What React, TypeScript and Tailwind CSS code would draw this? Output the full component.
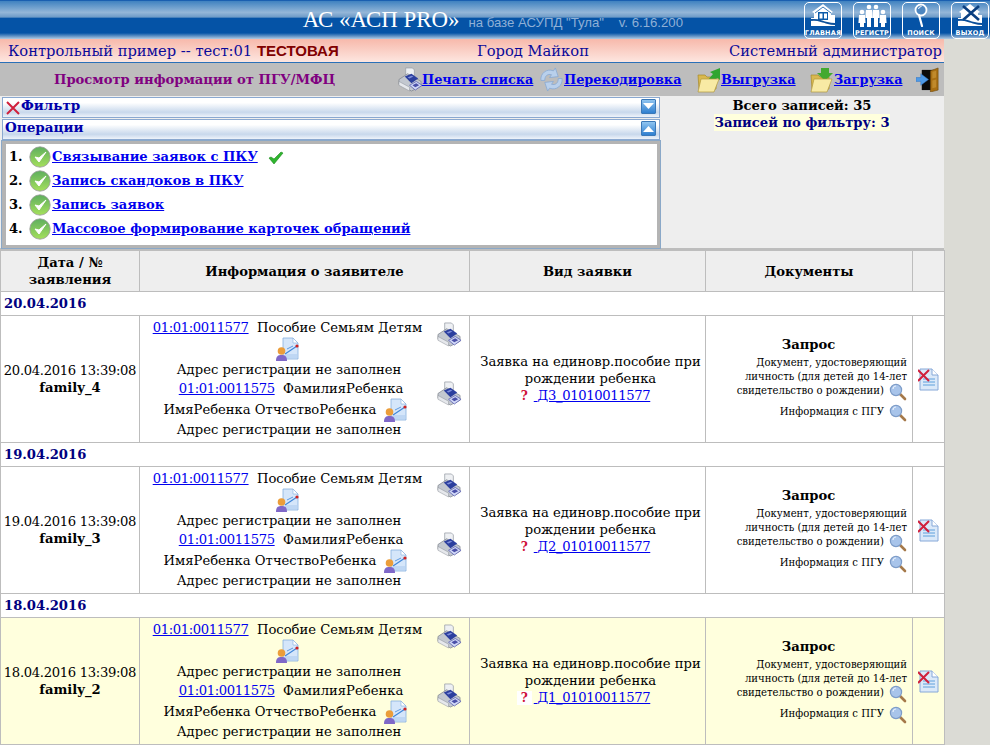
import React from "react";

const Printer = ({ className = "" }: { className?: string }) => (
  <svg viewBox="0 0 26 26" className={`w-[25px] h-[25px] shrink-0 ${className}`}>
    <path d="M8 1h7l2 2v8H8z" fill="#eef0f3" stroke="#9a9fa8" strokeWidth=".8" />
    <path d="M1 13l9-6 14 8v5l-10 5-13-7z" fill="#c3c8d0" stroke="#7a7f88" strokeWidth=".7" />
    <path d="M7 10l7-3 7 5-7 5z" fill="#2c3f9e" />
    <path d="M10 11l4-2 2 1-4 2z" fill="#7f8fdc" />
    <path d="M12 19l7-4 6 4-7 5z" fill="#cfd6f5" stroke="#5a5fb0" strokeWidth=".8" />
    <path d="M15 19l4-2 3 2-4 2z" fill="#4a4fa8" />
    <path d="M1 15l11 6v4l-11-6z" fill="#e6e8ec" stroke="#8b9098" strokeWidth=".5" />
  </svg>
);

const Recode = () => (
  <svg viewBox="0 0 26 26" className="w-[25px] h-[25px] shrink-0">
    <path d="M2 14C1 7 8 1 15 4l2-3 3 9-9 1 2-3c-4-1-7 1-7 6z" fill="#b9d0ec" stroke="#86a8d2" strokeWidth=".8" />
    <path d="M24 12c1 7-6 13-13 10l-2 3-3-9 9-1-2 3c4 1 7-1 7-6z" fill="#b9d0ec" stroke="#86a8d2" strokeWidth=".8" />
  </svg>
);

const Folder = ({ mode }: { mode: "up" | "down" }) => (
  <svg viewBox="0 0 24 26" className="w-[24px] h-[26px] shrink-0">
    <path d="M1 8h7l2 2h9v12H2z" fill="#d9b84e" stroke="#a88a2a" strokeWidth=".7" />
    {mode === "up" ? (
      <path d="M10 14l6-7-3-2 10-4v12l-3-2-5 7z" fill="#2fa52f" />
    ) : (
      <path d="M11 1h8v5h4l-8 8-8-8h4z" fill="#43a92f" />
    )}
    <path d="M4 12h18l-5 13H1z" fill="#f8eaa4" stroke="#b39a3c" strokeWidth=".7" />
  </svg>
);

const Door = () => (
  <svg viewBox="0 0 26 26" className="w-[25px] h-[25px] shrink-0">
    <path d="M6 3h13v21H6z" fill="#0c0c0c" />
    <path d="M15 4l8-3v23l-8 2z" fill="#a86f14" stroke="#6e4708" strokeWidth=".6" />
    <path d="M17 5l4-1v7l-4 1zM17 14l4-1v8l-4 1z" fill="#c08a2c" />
    <path d="M0 11h5V7l8 6-8 6v-4H0z" fill="#4f9be8" stroke="#2d6fbf" strokeWidth=".5" />
  </svg>
);

const GreenCheck = () => (
  <svg viewBox="0 0 22 22" className="w-[22px] h-[22px] shrink-0">
    <defs>
      <linearGradient id="gc" x1="0" y1="0" x2="0" y2="1">
        <stop offset="0" stopColor="#5fae5f" />
        <stop offset="1" stopColor="#a5e05c" />
      </linearGradient>
    </defs>
    <circle cx="11" cy="11" r="10.2" fill="url(#gc)" stroke="#9a9a9a" strokeWidth=".8" />
    <path d="M6 11l4 5 7-10-7 6z" fill="#fff" stroke="#fff" strokeWidth="1" strokeLinejoin="round" />
  </svg>
);

const SmallCheck = () => (
  <svg viewBox="0 0 16 14" className="w-[16px] h-[14px]">
    <path d="M1 7l5 6L15 2l-2-1-7 7-3-2z" fill="#2fb52f" stroke="#1a8a1a" strokeWidth=".6" />
  </svg>
);

const Cross = ({ className = "" }: { className?: string }) => (
  <svg viewBox="0 0 14 14" className={`w-[14px] h-[14px] shrink-0 ${className}`}>
    <path d="M1 1l12 12M13 1L1 13" stroke="#d0203c" strokeWidth="2" />
  </svg>
);

const Toggle = ({ up }: { up?: boolean }) => (
  <span className="mt-[1px] w-[15px] h-[15px] bg-[linear-gradient(#8fc4f0,#2f7fd0)] border border-[#3a78b8] rounded-[1px] flex items-center justify-center">
    <svg viewBox="0 0 11 7" className="w-[11px] h-[7px]">
      <path d={up ? "M0 7l5.5-6 5.5 6z" : "M0 0l5.5 6 5.5-6z"} fill="#fff" />
    </svg>
  </span>
);

const Person = () => (
  <svg viewBox="0 0 24 24" className="w-[24px] h-[24px] inline-block align-middle shrink-0">
    <path d="M8 1h10l5 5v16H8z" fill="#d5e6fa" stroke="#85aede" strokeWidth=".8" />
    <path d="M18 1v5h5z" fill="#fff" stroke="#85aede" strokeWidth=".6" />
    <path d="M10 17l12-8" stroke="#3d85d8" strokeWidth="1.2" />
    <path d="M12 12l6-3" stroke="#3d85d8" strokeWidth=".8" />
    <path d="M10 20h12M10 18h12" stroke="#a8c8ee" strokeWidth="1" />
    <circle cx="22" cy="9" r="1.6" fill="#cc2222" />
    <circle cx="6.5" cy="14" r="3.8" fill="#eb9d3a" />
    <path d="M1 24c0-5 2-6 5.5-6s5.5 1 5.5 6z" fill="#7f68c8" />
  </svg>
);

const Magnifier = () => (
  <svg viewBox="0 0 18 18" className="w-[18px] h-[18px] inline-block align-middle shrink-0">
    <path d="M10 10l6 6" stroke="#a5794a" strokeWidth="2.6" strokeLinecap="round" />
    <circle cx="7" cy="7" r="5.6" fill="#a8c4ea" stroke="#7d9cc8" strokeWidth="1.2" />
    <path d="M4 6a3 3 0 0 1 3-3" stroke="#e8f0fb" strokeWidth="1.2" fill="none" />
  </svg>
);

const DocCross = () => (
  <svg viewBox="0 0 21 23" className="w-[21px] h-[23px]">
    <path d="M2 1h12l6 6v15H2z" fill="#dbe9f9" stroke="#86a8d8" />
    <path d="M14 1v6h6" fill="#fff" stroke="#86a8d8" />
    <path d="M5 11h12M5 14h12M5 17h12" stroke="#5fa0dc" />
    <path d="M0 2l11 11M11 2L0 13" stroke="#d0203c" strokeWidth="2" />
  </svg>
);

const HouseGlyph = () => (
  <svg viewBox="0 0 30 24" className="w-[30px] h-[24px]">
    <path d="M15 1L4 9l2 1v5H3v8h24V12h-4v-2l2-1z" fill="#fff" />
    <path d="M7 10L15 4l8 6" stroke="#0b5aa8" strokeWidth=".8" fill="none" />
    <path d="M10 9h10v8H10z" fill="#0b5aa8" />
    <path d="M11.5 10.5h3v5h-3zM16 10.500h3v5h-3z" fill="#fff" />
    <path d="M3 17c7-1 9 1 13 2s7 2 11 2" stroke="#0b4f9a" strokeWidth="1.8" fill="none" />
  </svg>
);
const PeopleGlyph = () => (
  <svg viewBox="0 0 30 24" className="w-[30px] h-[24px]">
    {[
      [5, 7],
      [12, 2],
      [19, 2],
      [26, 7],
    ].map(([x, y]) => (
      <g key={x} fill="#fff">
        <circle cx={x} cy={y + 2} r="2.3" />
        <path d={`M${x - 3} ${y + 5}h6l.6 8h-1.600v${20 - y - 4}h-4v-${20 - y - 4}h-1.600z`} />
      </g>
    ))}
  </svg>
);
const SearchGlyph = () => (
  <svg viewBox="0 0 18 24" className="w-[18px] h-[24px]">
    <circle cx="9" cy="7" r="5.5" fill="#4d86c0" stroke="#fff" strokeWidth="1.800" />
    <path d="M7 12l3 11" stroke="#fff" strokeWidth="2.2" strokeLinecap="round" />
    <path d="M6.500 6a3 3 0 0 1 3-2.500" stroke="#fff" fill="none" />
  </svg>
);
const ExitGlyph = () => (
  <svg viewBox="0 0 30 24" className="w-[30px] h-[24px]">
    <path d="M15 1L4 9l2 1v5H3v8h24V12h-4v-2l2-1z" fill="#fff" />
    <path d="M8 3l16 14M24 3L8 17" stroke="#0b3f80" strokeWidth="2.600" />
    <path d="M3 17c7-1 9 1 13 2s7 2 11 2" stroke="#0b4f9a" strokeWidth="1.800" fill="none" />
  </svg>
);

const NavBtn = ({ label, children }: { label: string; children: React.ReactNode }) => (
  <div className="w-[38px] h-[37px] border border-white rounded-[5px] flex flex-col items-center justify-between">
    <div className="h-[25px] flex items-center justify-center">{children}</div>
    <span className="text-[6.5px] leading-[10px] font-bold text-white tracking-[0.2px] whitespace-nowrap font-['DejaVu_Sans',sans-serif]">{label}</span>
  </div>
);

const ToolLink = ({ icon, label, w }: { icon: React.ReactNode; label: string; w: string }) => (
  <span className="flex items-center">
    {icon}
    <a className={`text-[#0000ee] underline font-bold text-[12.85px] whitespace-nowrap ${w}`}>{label}</a>
  </span>
);

const Panel = ({ title, icon, up }: { title: string; icon?: React.ReactNode; up?: boolean }) => (
  <div className="h-[21px] border border-[#8aa8d0] bg-[linear-gradient(#ffffff,#ffffff_25%,#c8d8ec_75%,#eef3fa)] flex items-start pl-[2px] pr-[3px] justify-between">
    <span className="flex items-start font-bold text-[#0000aa] text-[13.5px] leading-[15px]">
      {icon}
      {title}
    </span>
    <Toggle up={up} />
  </div>
);

const PersonBlock = () => (
  <div className="flex flex-col -mt-[1px]">
    <div className="flex h-[60px]">
      <div className="flex-1 text-center leading-[20px] pr-[2px]">
        <a className="text-[#0000ee] underline tracking-[-0.38px]">01:01:0011577</a>
        <span>&nbsp; Пособие Семьям Детям</span>
        <div className="h-[22px] flex justify-center items-center pr-[2px]"><Person /></div>
        <div className="pl-[3px]">Адрес регистрации не заполнен</div>
      </div>
      <div className="w-[32px] pt-[4px] shrink-0"><Printer /></div>
    </div>
    <div className="flex h-[61px]">
      <div className="flex-1 text-center leading-[20px] pr-[2px] pt-[1px]">
        <div className="pl-[7px]">
          <a className="text-[#0000ee] underline tracking-[-0.38px]">01:01:0011575</a>
          <span>&nbsp; ФамилияРебенка</span>
        </div>
        <div className="flex justify-center items-center h-[21px] gap-[7px] pr-[4px]">
          <span>ИмяРебенка ОтчествоРебенка</span>
          <Person />
        </div>
        <div className="pl-[3px]">Адрес регистрации не заполнен</div>
      </div>
      <div className="w-[32px] pt-[3px] shrink-0"><Printer /></div>
    </div>
  </div>
);

const Docs = () => (
  <div className="flex flex-col items-end pr-[5px]">
    <div className="w-full text-center leading-[16px] font-bold pl-[4px] mt-[1px]">Запрос</div>
    <div className="text-[10.1px] leading-[14px] text-right mt-[3px]">
      <div>Документ, удостоверяющий</div>
      <div>личность (для детей до 14-лет</div>
      <div className="flex items-center justify-end gap-[5px] h-[16px]">
        <span className="-mt-[2px]">свидетельство о рождении)</span>
        <Magnifier />
      </div>
      <div className="flex items-center justify-end gap-[5px] h-[18px] mt-[4px]">
        <span className="-mt-[3px]">Информация с ПГУ</span>
        <Magnifier />
      </div>
    </div>
  </div>
);

const rows = [
  { date: "20.04.2016", ts: "20.04.2016 13:39:08", name: "family_4", code: "Д3_01010011577" },
  { date: "19.04.2016", ts: "19.04.2016 13:39:08", name: "family_3", code: "Д2_01010011577" },
  { date: "18.04.2016", ts: "18.04.2016 13:39:08", name: "family_2", code: "Д1_01010011577", hl: true },
];

const cell = "border border-[#bdbdbd] align-middle";

export default function App() {
  return (
    <div className="w-[990px] h-[745px] overflow-hidden bg-[#dbdbd5] font-['DejaVu_Serif',serif] text-black">
      <header className="h-[39px] border-t border-[#1a5fb0] bg-[linear-gradient(#3f82c0_0%,#94b6d8_30%,#6f9cc8_42%,#0553a6_46%,#0553a6_84%,#b4cbe2_100%)] flex items-center justify-between">
        <div className="flex-1 flex items-baseline justify-end pr-[121px]">
          <span className="text-[22.9px] text-white font-['Liberation_Serif',serif] whitespace-nowrap">АС «АСП PRO»</span>
          <span className="ml-[9px] text-[13.2px] text-[#8fb0d6] font-['Liberation_Sans',sans-serif] whitespace-pre">на базе АСУПД "Тула"    v. 6.16.200</span>
        </div>
        <div className="flex gap-[11px] mr-[1px]">
          <NavBtn label="ГЛАВНАЯ"><HouseGlyph /></NavBtn>
          <NavBtn label="РЕГИСТР"><PeopleGlyph /></NavBtn>
          <NavBtn label="ПОИСК"><SearchGlyph /></NavBtn>
          <NavBtn label="ВЫХОД"><ExitGlyph /></NavBtn>
        </div>
      </header>
      <div className="w-[944px]">
        <div className="h-[24px] border-b border-[#2a70b8] bg-[linear-gradient(#f7b9ab,#fde6e0)] flex items-center pl-[8px] pr-[2px] text-[#0a0a9a] text-[14.7px] leading-[22px]">
          <span className="w-[469px] shrink-0 whitespace-nowrap">
            Контрольный пример -- тест:01{" "}
            <b className="font-['Liberation_Sans',sans-serif] text-[#800000] text-[15px]">ТЕСТОВАЯ</b>
          </span>
          <span className="flex-1">Город Майкоп</span>
          <span>Системный администратор</span>
        </div>
        <div className="h-[33px] bg-[#bdbdbd] flex items-center">
          <div className="w-[388px] shrink-0 pl-[54px] font-bold text-[13.14px] text-[#800080] whitespace-nowrap">Просмотр информации от ПГУ/МФЦ</div>
          <div className="flex items-center ml-[10px]">
            <ToolLink icon={<Printer />} label="Печать списка" w="w-[113px] ml-[-1px]" />
            <span className="ml-[4px]"><ToolLink icon={<Recode />} label="Перекодировка" w="w-[118px]" /></span>
            <span className="ml-[15px]"><ToolLink icon={<Folder mode="up" />} label="Выгрузка" w="w-[74px]" /></span>
            <span className="ml-[15px]"><ToolLink icon={<Folder mode="down" />} label="Загрузка" w="w-[67px]" /></span>
            <span className="ml-[15px]"><Door /></span>
          </div>
        </div>
        <div className="h-[154px] bg-[#eeeeee] flex border-b-2 border-[#bdbdbd] text-[13.15px]">
          <div className="w-[660px] shrink-0 pl-[2px] pt-[1px] flex flex-col gap-[1px]">
            <Panel title="Фильтр" icon={<Cross className="mt-[3px] mr-[1px] ml-[1px]" />} />
            <Panel title="Операции" up />
            <div className="h-[107px] border-[3px] border-[#b4b4b4] border-l-[4px] bg-white ring-1 ring-[#8aa8c8] pt-[1px] pl-[3px]">
              {[
                "Связывание заявок с ПКУ",
                "Запись скандоков в ПКУ",
                "Запись заявок",
                "Массовое формирование карточек обращений",
              ].map((t, i) => (
                <div key={t} className="flex items-center h-[24px] text-[13.07px] font-bold">
                  <span className="w-[20px]">{i + 1}.</span>
                  <GreenCheck />
                  <a className="text-[#0000ee] underline ml-[1px]">{t}</a>
                  {i === 0 && <span className="ml-[10px] mt-[2px]"><SmallCheck /></span>}
                </div>
              ))}
            </div>
          </div>
          <div className="flex-1 flex flex-col items-center font-bold leading-[17px] pt-[1px]">
            <div>Всего записей: 35</div>
            <div className="bg-[#ffffdd] text-[#000080]">Записей по фильтру: 3</div>
          </div>
        </div>
        <table className="w-[944px] table-fixed border-collapse bg-white text-[13.15px]">
          <colgroup>
            <col className="w-[139px]" />
            <col className="w-[330px]" />
            <col className="w-[236px]" />
            <col className="w-[207px]" />
            <col className="w-[32px]" />
          </colgroup>
          <thead>
            <tr className="h-[41px] bg-[#eeeeee] font-bold text-center leading-[17px]">
              <th className={cell}>Дата / №<br />заявления</th>
              <th className={cell}>Информация о заявителе</th>
              <th className={cell}>Вид заявки</th>
              <th className={cell}>Документы</th>
              <th className={cell}></th>
            </tr>
          </thead>
          <tbody>
            {rows.map((r) => (
              <React.Fragment key={r.date}>
                <tr className="h-[24px]">
                  <td colSpan={5} className={`${cell} pl-[3px] font-bold text-[#000080]`}>{r.date}</td>
                </tr>
                <tr className={`h-[127px] leading-[17px] ${r.hl ? "bg-[#ffffdd]" : ""}`}>
                  <td className={`${cell} text-center whitespace-nowrap`}>
                    <span className="tracking-[-0.32px]">{r.ts}</span>
                    <br />
                    <b>{r.name}</b>
                  </td>
                  <td className={cell}><PersonBlock /></td>
                  <td className={`${cell} text-center pl-[6px] pr-[0px]`}>
                    Заявка на единовр.пособие при рождении ребенка
                    <div className="pr-[14px]">
                      <span className="bg-white text-[#d0103a] font-bold text-[12px] px-[4px] mr-[2px]">?</span>
                      <a className="text-[#0000ee] underline tracking-[-0.35px]">&nbsp;{r.code}</a>
                    </div>
                  </td>
                  <td className={cell}><Docs /></td>
                  <td className={cell}><div className="flex justify-center"><DocCross /></div></td>
                </tr>
              </React.Fragment>
            ))}
          </tbody>
        </table>
      </div>
    </div>
  );
}
